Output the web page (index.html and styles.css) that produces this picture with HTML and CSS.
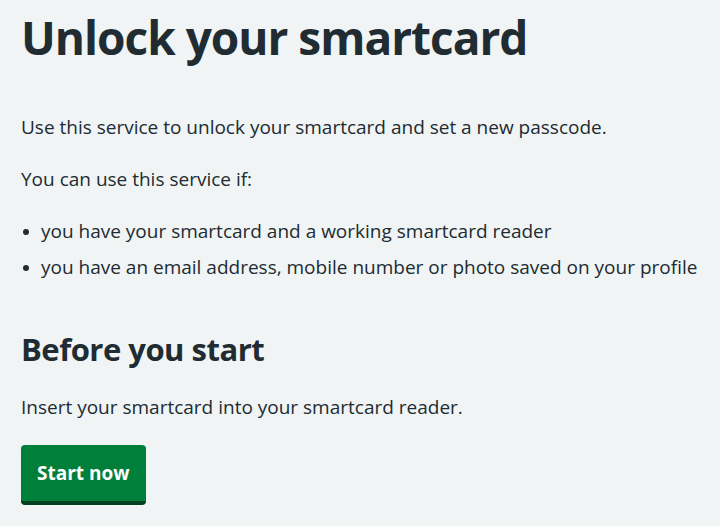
FILE: index.html
```html
<!DOCTYPE html>
<html lang="en">
<head>
<meta charset="utf-8">
<title>Unlock your smartcard</title>
<link rel="stylesheet" href="styles.css">
</head>
<body>
<main class="page">
  <h1 class="title">Unlock your smartcard</h1>
  <p class="body">Use this service to unlock your smartcard and set a new passcode.</p>
  <p class="body">You can use this service if:</p>
  <ul class="list">
    <li>you have your smartcard and a working smartcard reader</li>
    <li>you have an email address, mobile number or photo saved on your profile</li>
  </ul>
  <h2 class="subtitle">Before you start</h2>
  <p class="body">Insert your smartcard into your smartcard reader.</p>
  <a class="button" href="#">Start now</a>
</main>
</body>
</html>
```
FILE: styles.css
```css
html, body {
  margin: 0;
  padding: 0;
  background: #f0f4f5;
}
body {
  font-family: "Open Sans", "Noto Sans", Arial, sans-serif;
  color: #212b32;
}
.page {
  padding: 9px 21px 0;
}
.title {
  font-size: 46px;
  line-height: 56px;
  letter-spacing: -1px;
  font-weight: 700;
  margin: 0 0 48px;
}
.body {
  font-size: 19px;
  line-height: 28px;
  margin: 0 0 24px;
}
.list {
  list-style: none;
  padding: 0;
  margin: 0 0 48px;
  font-size: 19px;
  line-height: 28px;
}
.list li {
  position: relative;
  padding-left: 20px;
  margin-bottom: 8px;
}
.list li::before {
  content: "";
  position: absolute;
  left: 2px;
  top: 12px;
  width: 6px;
  height: 6px;
  border-radius: 50%;
  background: #212b32;
}
.subtitle {
  font-size: 31px;
  line-height: 40px;
  letter-spacing: -0.5px;
  font-weight: 700;
  margin: 0 0 24px;
}
.button {
  display: inline-block;
  background: #007f3b;
  color: #fff;
  font-size: 19px;
  line-height: 28px;
  font-weight: 700;
  text-decoration: none;
  padding: 14px 16px;
  border-radius: 4px;
  border-bottom: 4px solid #00401e;
}
```
